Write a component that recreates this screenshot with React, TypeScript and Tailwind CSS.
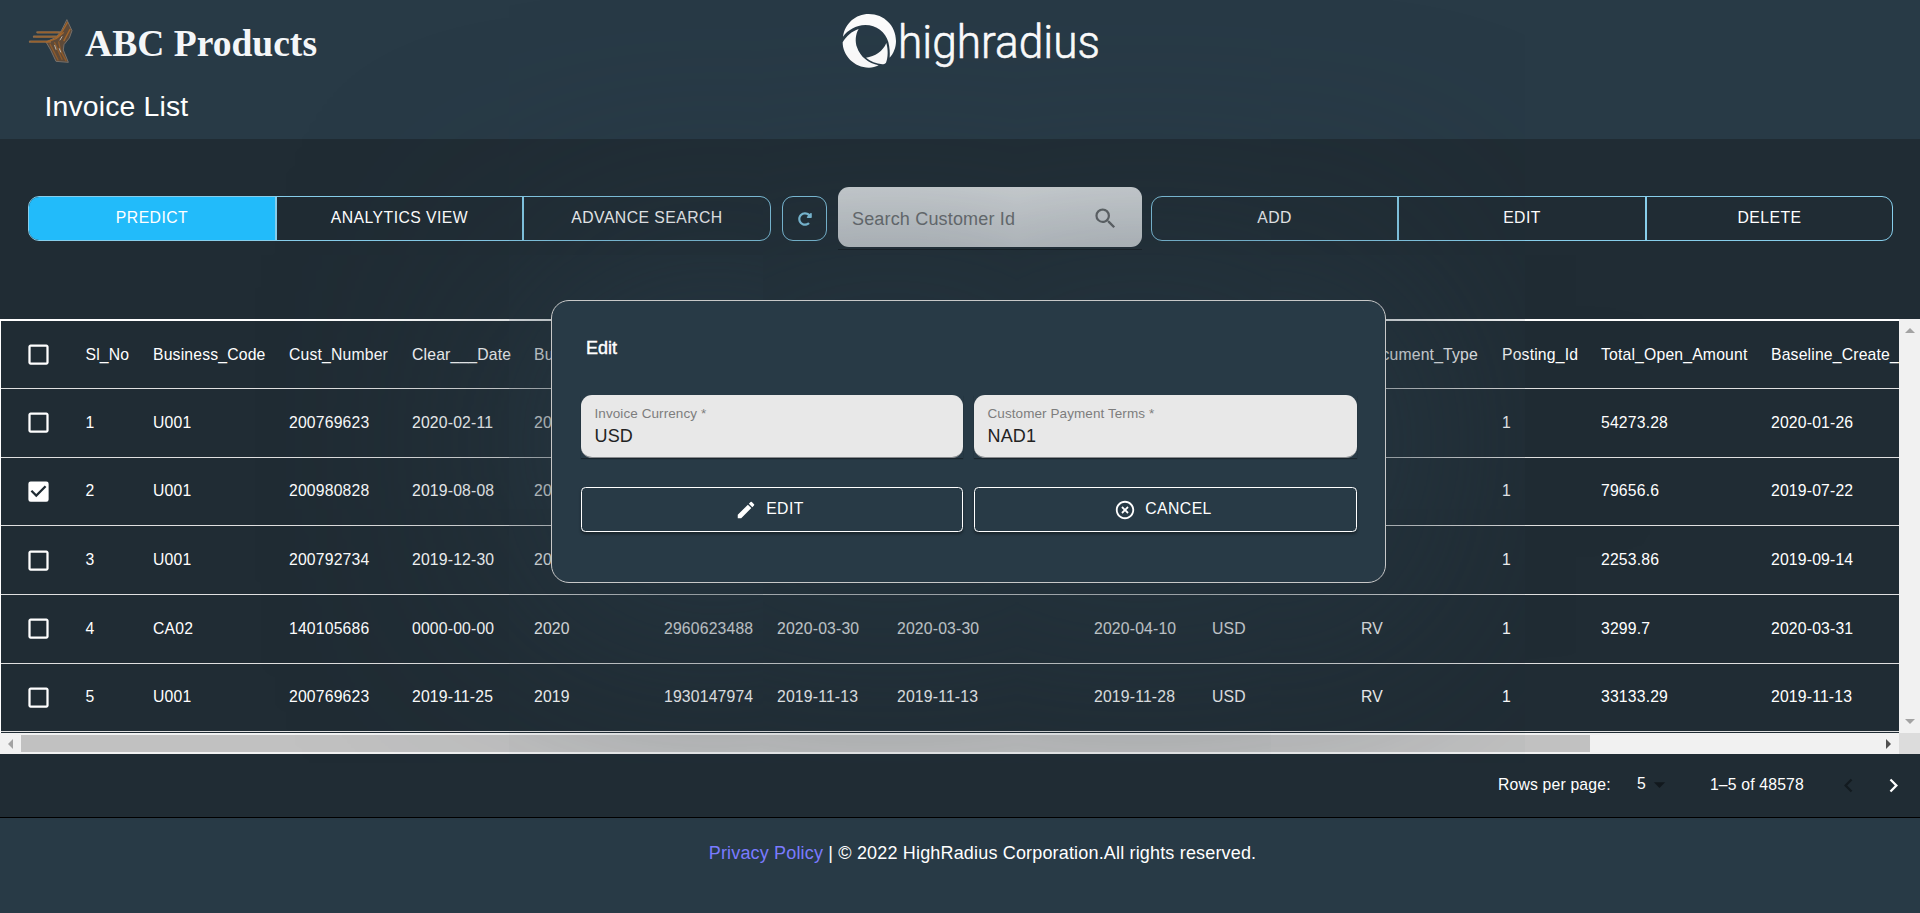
import { FaRedoAlt } from "react-icons/fa";
import {
  MdArrowDropDown,
  MdCheckBox,
  MdCheckBoxOutlineBlank,
  MdEdit,
  MdHighlightOff,
  MdKeyboardArrowLeft,
  MdKeyboardArrowRight,
  MdSearch,
} from "react-icons/md";

const headers = [
  "Sl_No",
  "Business_Code",
  "Cust_Number",
  "Clear___Date",
  "Business_Year",
  "",
  "",
  "",
  "",
  "",
  "Document_Type",
  "Posting_Id",
  "Total_Open_Amount",
  "Baseline_Create_Date",
];

type Row = { height: string; nudge: string; pad: string; checked?: boolean; cells: string[] };

const rows: Row[] = [
  { height: "h-[69px]", nudge: "mb-[1px]", pad: "pb-0", cells: ["1", "U001", "200769623", "2020-02-11", "2020", "", "", "", "", "", "", "1", "54273.28", "2020-01-26"] },
  { height: "h-[68px]", nudge: "", pad: "pb-[2px]", checked: true, cells: ["2", "U001", "200980828", "2019-08-08", "2019", "", "", "", "", "", "", "1", "79656.6", "2019-07-22"] },
  { height: "h-[69px]", nudge: "mt-[1px]", pad: "pb-0", cells: ["3", "U001", "200792734", "2019-12-30", "2019", "", "", "", "", "", "", "1", "2253.86", "2019-09-14"] },
  { height: "h-[69px]", nudge: "mb-[1px]", pad: "pb-0", cells: ["4", "CA02", "140105686", "0000-00-00", "2020", "2960623488", "2020-03-30", "2020-03-30", "2020-04-10", "USD", "RV", "1", "3299.7", "2020-03-31"] },
  { height: "h-[68px]", nudge: "", pad: "pb-[2px]", cells: ["5", "U001", "200769623", "2019-11-25", "2019", "1930147974", "2019-11-13", "2019-11-13", "2019-11-28", "USD", "RV", "1", "33133.29", "2019-11-13"] },
];

const gridCols =
  "grid grid-cols-[84.500px_67.500px_136px_123px_122px_130px_113px_120px_197px_118px_149px_141px_99px_170px_200px] items-center";

function AbcLogo() {
  return (
    <svg className="h-[60px] w-[300px] overflow-visible" viewBox="0 0 300 60">
      <g transform="translate(-9 -4) scale(0.333333)" fill="none" strokeLinecap="round" strokeLinejoin="round">
        <path d="M141 30L156 62L148 84L132 104L130 120L145 157L108 154L92 120L78 96L108 82L124 62Z" fill="#5f4a38" stroke="#77706a" strokeWidth="3" />
        <path d="M52 67H118M42 80H112M30 95H90" stroke="#8d6a48" strokeWidth="7" />
        <path d="M56 67H112M48 81H108M34 95H88" stroke="#9a612a" strokeWidth="3" />
        <path d="M142 38L128 62L110 84M150 58L132 92M80 96L108 86L130 68" stroke="#a4662b" strokeWidth="4" />
        <path d="M90 102L114 150M104 98L126 148M116 96L122 122L138 152" stroke="#8f5b2b" strokeWidth="4" />
        <path d="M104 106L108 118M118 116L122 126M120 90L126 80" stroke="#b9b4ac" strokeWidth="3" />
      </g>
      <text
        x="56"
        y="41.500"
        textLength="232"
        lengthAdjust="spacingAndGlyphs"
        className="fill-[#f4f6f8] font-['Liberation_Serif',serif] text-[38px] font-bold"
      >
        ABC Products
      </text>
    </svg>
  );
}

function HighRadiusLogo() {
  return (
    <svg className="h-[64px] w-[264px] overflow-visible" viewBox="0 0 264 64">
      <g transform="translate(-38.670 -10) scale(0.333333)" fill="#fdfdfd">
        <path d="M128 110C134 70 166 42 205 42C252 42 287 78 287 123C287 142 280 160 268 173C269 158 268 142 264 126C256 96 228 75 195 75C167 76 142 90 128 110Z" />
        <path d="M175 87C165 103 164 125 170 142C180 171 204 190 235 196C226 201 216 203 206 203C161 203 127 167 127 127C138 108 154 94 175 87Z" />
        <path d="M258 129C264 150 263 173 257 188C254 191 250 193 246 193C228 191 210 184 197 173C224 170 248 153 258 129Z" />
      </g>
      <text
        x="59"
        y="48"
        textLength="202"
        lengthAdjust="spacingAndGlyphs"
        stroke="#fdfdfd"
        strokeWidth="0.6"
        strokeLinejoin="round"
        className="fill-[#fdfdfd] font-[Roboto,sans-serif] text-[46px] font-light"
      >
        highradius
      </text>
    </svg>
  );
}

const buttonText = "text-[15.75px] tracking-[0.45px] text-white";

function Field({ label, value, width }: { label: string; value: string; width: string }) {
  return (
    <div className={`${width} h-[63px] bg-[#283a46] shadow-[0_1px_1px_rgba(0,0,0,0.35)]`}>
      <div className="flex h-[63px] flex-col rounded-[11px] border-b border-[#888b8e] bg-[#e8e8e8] pl-[13.500px] pt-[10px]">
        <span className="text-[13.500px] leading-[17px] tracking-[0.08px] text-[#7d7d7d]">{label}</span>
        <span className="mt-[3px] text-[18px] leading-[22px] tracking-[0.17px] text-[#222]">{value}</span>
      </div>
    </div>
  );
}

export default function App() {
  return (
    <div className="relative flex h-[913px] w-[1920px] flex-col overflow-hidden bg-[#202c34] font-['Liberation_Sans',Arial,sans-serif] text-white">
      <header className="h-[139px] shrink-0 bg-[#283a46]">
        <div className="flex h-[80px] items-start">
          <div className="pl-[29px] pt-[14px]">
            <AbcLogo />
          </div>
          <div className="pl-[510px] pt-[10px]">
            <HighRadiusLogo />
          </div>
        </div>
        <h1 className="pl-[44.500px] pt-[9px] text-[28.400px] leading-[34px] tracking-[0.150px]">Invoice List</h1>
      </header>

      <section className="flex h-[180px] shrink-0 items-start pl-[28px] pt-[48px]">
        <div className="mt-[9px] flex h-[45px] w-[743px] overflow-hidden rounded-[11px] border border-[#87ceeb]">
          <button className={`w-[248px] border-r-2 border-[#87ceeb] bg-[#22bbfa] pb-[2px] ${buttonText}`}>PREDICT</button>
          <button className={`w-[247px] border-r-2 border-[#87ceeb] pb-[2px] ${buttonText}`}>ANALYTICS VIEW</button>
          <button className={`flex-1 pb-[2px] ${buttonText}`}>ADVANCE SEARCH</button>
        </div>
        <button className="ml-[11px] mt-[9px] flex h-[45px] w-[45px] items-center justify-center rounded-[11px] border border-[#87ceeb] text-[#87ceeb]">
          <FaRedoAlt className="size-[14px]" />
        </button>
        <div className="ml-[11px] h-[63px] w-[304px] border-b border-black/40">
          <div className="flex h-[60px] items-center rounded-[11px] bg-linear-to-b from-[#dcdfe1] to-[#d2d5d8] pl-[14px] pr-[23px]">
            <span className="flex-1 pt-[4px] text-[18px] tracking-[0.17px] text-[#707274]">Search Customer Id</span>
            <MdSearch className="mt-[2px] size-[27px] text-[#66686a]" />
          </div>
        </div>
        <div className="ml-[9px] mt-[9px] flex h-[45px] w-[742px] overflow-hidden rounded-[11px] border border-[#87ceeb]">
          <button className={`w-[247px] border-r-2 border-[#87ceeb] pb-[2px] ${buttonText}`}>ADD</button>
          <button className={`w-[248px] border-r-2 border-[#87ceeb] pb-[2px] ${buttonText}`}>EDIT</button>
          <button className={`flex-1 pb-[2px] ${buttonText}`}>DELETE</button>
        </div>
      </section>

      <section className="flex h-[414px] shrink-0">
        <div className="w-[1899px] overflow-hidden border-l border-t-2 border-white text-[15.750px] tracking-[0.17px]">
          <div className={`${gridCols} h-[68px] border-b border-[#e0e0e0]`}>
            <MdCheckBoxOutlineBlank className="ml-[24px] size-[27px]" />
            {headers.map((h, i) => (
              <span key={i} className="whitespace-nowrap">
                {h}
              </span>
            ))}
          </div>
          {rows.map((row) => (
            <div key={row.cells[0]} className={`${gridCols} ${row.height} border-b border-[#e0e0e0]`}>
              {row.checked ? (
                <MdCheckBox className="ml-[24px] size-[27px]" />
              ) : (
                <MdCheckBoxOutlineBlank className={`ml-[24px] size-[27px] ${row.nudge}`} />
              )}
              {row.cells.map((c, i) => (
                <span key={i} className={`whitespace-nowrap ${row.pad}`}>
                  {c}
                </span>
              ))}
            </div>
          ))}
        </div>
        <div className="flex w-[21px] flex-col items-center justify-between bg-[#f1f1f1] pb-[9px] pt-[9px]">
          <span className="border-x-[5px] border-b-[5px] border-x-transparent border-b-[#a3a3a3]" />
          <span className="border-x-[5px] border-t-[5px] border-x-transparent border-t-[#a3a3a3]" />
        </div>
      </section>

      <div className="flex h-[21px] shrink-0 items-center bg-[#f1f1f1]">
        <div className="flex w-[21px] justify-center">
          <span className="border-y-[5px] border-r-[5px] border-y-transparent border-r-[#a3a3a3]" />
        </div>
        <div className="h-[17px] w-[1569px] bg-[#c1c1c1]" />
        <div className="flex flex-1 justify-end pr-[8px]">
          <span className="border-y-[5px] border-l-[5px] border-y-transparent border-l-[#505050]" />
        </div>
        <div className="h-[21px] w-[21px] bg-[#dcdcdc]" />
      </div>

      <div className="flex h-[64px] shrink-0 items-center border-b border-black pb-[2px] pl-[1498px] text-[15.750px] tracking-[0.17px]">
        <span className="w-[139px]">Rows per page:</span>
        <span className="pb-[2px]">5</span>
        <MdArrowDropDown className="size-[27px] text-[#11181d]" />
        <span className="ml-[37px] w-[125px]">1–5 of 48578</span>
        <MdKeyboardArrowLeft className="mt-[1px] size-[27px] text-[#131b20]" />
        <MdKeyboardArrowRight className="ml-[18px] mt-[1px] size-[27px]" />
      </div>

      <footer className="flex flex-1 justify-center bg-[#283a46] pl-[45px] pt-[24px] text-[18px] leading-[22px] tracking-[0.17px]">
        <p>
          <a className="text-[#7b7bff]">Privacy Policy</a> | © 2022 HighRadius Corporation.All rights reserved.
        </p>
      </footer>

      <div
        role="dialog"
        className="absolute left-[551px] top-[300px] h-[283px] w-[835px] rounded-[18px] border border-[#c8c8c8] bg-[#283a46] pl-[29px] pt-[36px] shadow-[0_0_250px_15px_#283a46]"
      >
        <h2 className="pl-[5px] text-[18px] font-normal leading-[22px] [-webkit-text-stroke:0.4px_white]">Edit</h2>
        <div className="mt-[36px] flex gap-[11px]">
          <Field label="Invoice Currency *" value="USD" width="w-[382px]" />
          <Field label="Customer Payment Terms *" value="NAD1" width="w-[383px]" />
        </div>
        <div className="mt-[29px] flex gap-[11px]">
          <button className={`flex h-[45px] w-[382px] items-center justify-center rounded-[4.500px] border border-white pr-[5px] shadow-[0_2px_3px_rgba(0,0,0,0.4)] ${buttonText}`}>
            <MdEdit className="mr-[9px] size-[22px]" />
            <span className="pb-[2px]">EDIT</span>
          </button>
          <button className={`flex h-[45px] w-[383px] items-center justify-center rounded-[4.500px] border border-white pr-[5px] shadow-[0_2px_3px_rgba(0,0,0,0.4)] ${buttonText}`}>
            <MdHighlightOff className="mr-[9px] size-[22px]" />
            <span className="pb-[2px]">CANCEL</span>
          </button>
        </div>
      </div>
    </div>
  );
}
